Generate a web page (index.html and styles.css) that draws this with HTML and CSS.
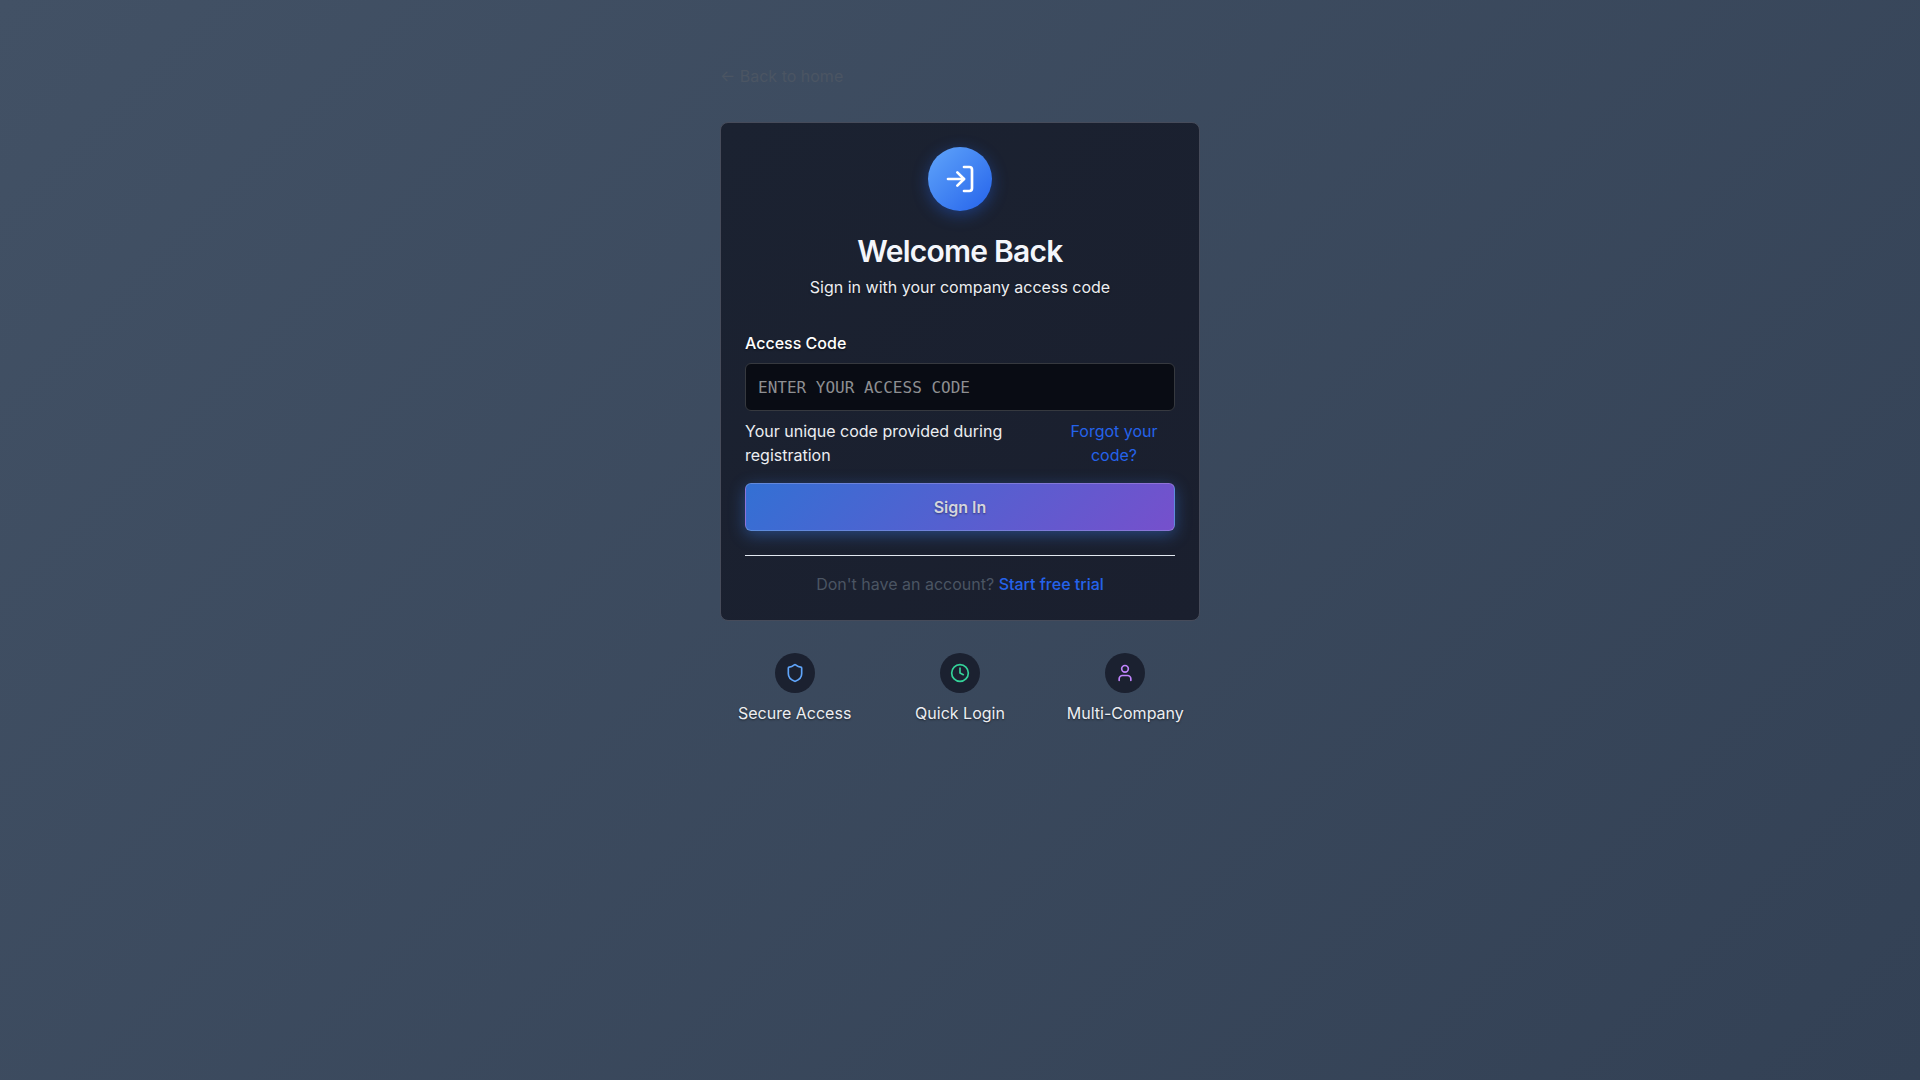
FILE: index.html
```html
<!DOCTYPE html>
<html lang="en">
<head>
<meta charset="utf-8">
<meta name="viewport" content="width=device-width, initial-scale=1">
<title>Sign In</title>
<link rel="stylesheet" href="styles.css">
</head>
<body>
<main class="page">
  <a class="back" href="#">← Back to home</a>
  <section class="card">
    <header class="intro">
      <span class="badge">
        <svg class="badge-icon" viewBox="0 0 24 24" aria-hidden="true"><path d="M15 3h4a2 2 0 0 1 2 2v14a2 2 0 0 1-2 2h-4"/><path d="m10 17 5-5-5-5"/><path d="M15 12H3"/></svg>
      </span>
      <h1 class="title">Welcome Back</h1>
      <p class="subtitle">Sign in with your company access code</p>
    </header>
    <form class="form">
      <label class="label" for="code">Access Code</label>
      <input class="input" id="code" type="text" placeholder="ENTER YOUR ACCESS CODE">
      <div class="help">
        <p class="hint">Your unique code provided during registration</p>
        <a class="forgot" href="#">Forgot your code?</a>
      </div>
      <button class="submit" type="submit">Sign In</button>
    </form>
    <p class="signup">Don't have an account? <a class="trial" href="#">Start free trial</a></p>
  </section>
  <ul class="features">
    <li class="feature">
      <span class="dot blue"><svg class="icon" viewBox="0 0 24 24" aria-hidden="true"><path d="M20 13c0 5-3.500 7.500-7.660 8.950a1 1 0 0 1-.67-.01C7.500 20.500 4 18 4 13V6a1 1 0 0 1 1-1c2 0 4.500-1.200 6.240-2.720a1.170 1.170 0 0 1 1.520 0C14.510 3.810 17 5 19 5a1 1 0 0 1 1 1z"/></svg></span>
      <span class="name">Secure Access</span>
    </li>
    <li class="feature">
      <span class="dot green"><svg class="icon" viewBox="0 0 24 24" aria-hidden="true"><circle cx="12" cy="12" r="10"/><path d="M12 6v6l4 2"/></svg></span>
      <span class="name">Quick Login</span>
    </li>
    <li class="feature">
      <span class="dot purple"><svg class="icon" viewBox="0 0 24 24" aria-hidden="true"><path d="M19 21v-2a4 4 0 0 0-4-4H9a4 4 0 0 0-4 4v2"/><circle cx="12" cy="7" r="4"/></svg></span>
      <span class="name">Multi-Company</span>
    </li>
  </ul>
</main>
</body>
</html>
```
FILE: styles.css
```css
* { box-sizing: border-box; margin: 0; }
body {
  min-height: 100vh;
  background: linear-gradient(135deg, #425165, #334155);
  font: 16px/24px Inter, sans-serif;
  color: #eceef2;
}
a { text-decoration: none; }
svg { fill: none; stroke: currentColor; stroke-width: 2; stroke-linecap: round; stroke-linejoin: round; }
.page { max-width: 480px; margin: 0 auto; padding: 64px 0; }
.back { display: inline-block; margin-bottom: 34px; color: #4b5563; }
.card {
  padding: 24px;
  border: 1px solid #464b5a;
  border-radius: 8px;
  background: linear-gradient(135deg, #1b2231, #1a1f2e);
}
.intro { display: flex; flex-direction: column; align-items: center; text-align: center; }
.badge {
  display: grid; place-items: center;
  width: 64px; height: 64px; margin-bottom: 20px;
  border-radius: 50%;
  background: linear-gradient(135deg, #60a5fa, #2563eb);
  box-shadow: 0 4px 16px rgba(37, 99, 235, .4);
  color: #fff;
}
.badge-icon { width: 32px; height: 32px; }
.title { font-size: 30px; line-height: 40px; font-weight: 600; letter-spacing: -0.025em; color: #f4f6fb; }
.subtitle { margin-top: 4px; text-shadow: 0 1px 2px rgba(0, 0, 0, .5); }
.form { display: flex; flex-direction: column; margin-top: 32px; }
.label { margin-bottom: 8px; font-weight: 500; color: #fff; text-shadow: 0 1px 2px rgba(0, 0, 0, .5); }
.input {
  width: 100%; height: 48px; padding: 0 12px;
  border: 1px solid #36393f; border-radius: 6px;
  background: #090c14;
  font: 16px/24px "DejaVu Sans Mono", monospace;
  color: #fff;
}
.input::placeholder { color: #8e8f92; opacity: 1; }
.help { display: flex; justify-content: space-between; margin-top: 8px; }
.hint { flex: 1; max-width: 290px; }
.forgot { width: 122px; padding: 0 12px; text-align: center; color: #2563eb; }
.submit {
  height: 48px; margin-top: 16px;
  border: 1px solid rgba(255, 255, 255, .2); border-radius: 6px;
  background: linear-gradient(135deg, #3370d4, #7650cc);
  box-shadow: 0 4px 16px rgba(59, 130, 246, .4);
  font: 600 16px/24px Inter, sans-serif;
  color: #d4d5dc;
  text-shadow: 0 1px 2px rgba(0, 0, 0, .4);
}
.signup { margin-top: 24px; padding-top: 16px; border-top: 1px solid #e2e8f0; text-align: center; color: #4b5563; }
.trial { font-weight: 500; color: #2563eb; }
.features { display: grid; grid-template-columns: repeat(3, 1fr); gap: 16px; margin-top: 32px; padding: 0; list-style: none; }
.feature { display: flex; flex-direction: column; align-items: center; gap: 8px; text-shadow: 0 1px 2px rgba(0, 0, 0, .5); }
.dot { display: grid; place-items: center; width: 40px; height: 40px; border-radius: 50%; background: #1b2130; }
.icon { width: 20px; height: 20px; }
.blue { color: #60a5fa; }
.green { color: #34d399; }
.purple { color: #c084fc; }
```
